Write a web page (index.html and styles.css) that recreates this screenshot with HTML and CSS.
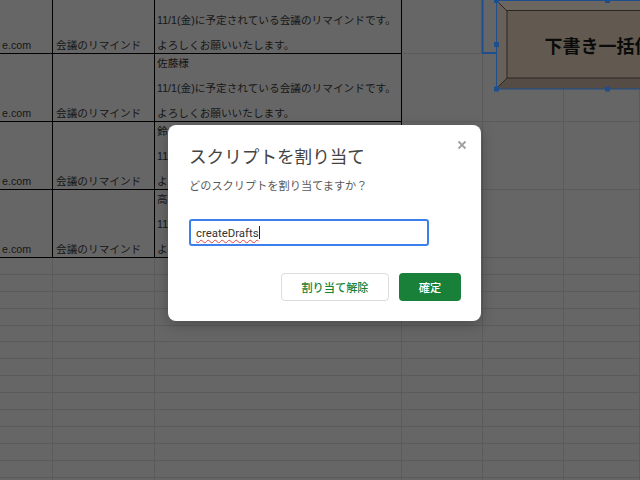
FILE: index.html
```html
<!DOCTYPE html>
<html lang="ja">
<head>
<meta charset="utf-8">
<title>スクリプトを割り当て</title>
<link rel="stylesheet" href="styles.css">
</head>
<body>
<div class="sheet">
  <div class="c b">e.com</div><div class="c b cb">会議のリマインド</div><div class="c b">田中様

11/1(金)に予定されている会議のリマインドです。

よろしくお願いいたします。</div><div class="c"></div><div class="c"></div><div class="c"></div>
  <div class="c b">e.com</div><div class="c b cb">会議のリマインド</div><div class="c b">佐藤様

11/1(金)に予定されている会議のリマインドです。

よろしくお願いいたします。</div><div class="c"></div><div class="c"></div><div class="c"></div>
  <div class="c b">e.com</div><div class="c b cb">会議のリマインド</div><div class="c b">鈴木様

11/1(金)に予定されている会議のリマインドです。

よろしくお願いいたします。</div><div class="c"></div><div class="c"></div><div class="c"></div>
  <div class="c b">e.com</div><div class="c b cb">会議のリマインド</div><div class="c b">高橋様

11/1(金)に予定されている会議のリマインドです。

よろしくお願いいたします。</div><div class="c"></div><div class="c"></div><div class="c"></div>
  <div class="c"></div><div class="c"></div><div class="c"></div><div class="c"></div><div class="c"></div><div class="c"></div>
  <div class="c"></div><div class="c"></div><div class="c"></div><div class="c"></div><div class="c"></div><div class="c"></div>
  <div class="c"></div><div class="c"></div><div class="c"></div><div class="c"></div><div class="c"></div><div class="c"></div>
  <div class="c"></div><div class="c"></div><div class="c"></div><div class="c"></div><div class="c"></div><div class="c"></div>
  <div class="c"></div><div class="c"></div><div class="c"></div><div class="c"></div><div class="c"></div><div class="c"></div>
  <div class="c"></div><div class="c"></div><div class="c"></div><div class="c"></div><div class="c"></div><div class="c"></div>
  <div class="c"></div><div class="c"></div><div class="c"></div><div class="c"></div><div class="c"></div><div class="c"></div>
  <div class="c"></div><div class="c"></div><div class="c"></div><div class="c"></div><div class="c"></div><div class="c"></div>
  <div class="c"></div><div class="c"></div><div class="c"></div><div class="c"></div><div class="c"></div><div class="c"></div>
  <div class="c"></div><div class="c"></div><div class="c"></div><div class="c"></div><div class="c"></div><div class="c"></div>
  <div class="c"></div><div class="c"></div><div class="c"></div><div class="c"></div><div class="c"></div><div class="c"></div>
  <div class="c"></div><div class="c"></div><div class="c"></div><div class="c"></div><div class="c"></div><div class="c"></div>
  <div class="c"></div><div class="c"></div><div class="c"></div><div class="c"></div><div class="c"></div><div class="c"></div>
  <div class="c"></div><div class="c"></div><div class="c"></div><div class="c"></div><div class="c"></div><div class="c"></div>
</div>

<svg class="drawing" viewBox="480 0 160 95" width="160" height="95" aria-label="下書き一括作成ボタン">
  <path d="M482.5 0 V53 H496" fill="none" stroke="#1f4e8c" stroke-width="2"/>
  <polygon points="496,0 719,0 708,11 507,11" fill="#6b665f"/>
  <polygon points="496,0 507,11 507,78 496,89" fill="#67615a"/>
  <polygon points="496,89 507,78 708,78 719,89" fill="#554d45"/>
  <rect x="507" y="10.5" width="201" height="67.5" fill="#625a50" stroke="#2a2622" stroke-width="1"/>
  <path d="M496 0 L507 11 M496 89 L507 78" stroke="#2a2622" stroke-width="1"/>
  <text class="drawing-label" x="607.5" y="45">下書き一括作成</text>
  <rect x="496.5" y="0.5" width="222" height="88.5" fill="none" stroke="#1f4e8c" stroke-width="1"/>
  <rect x="494" y="-2" width="5" height="5" fill="#1f4e8c"/>
  <rect x="494" y="42" width="5" height="5" fill="#1f4e8c"/>
  <rect x="494" y="86.5" width="5" height="5" fill="#1f4e8c"/>
  <rect x="605" y="-2" width="5" height="5" fill="#1f4e8c"/>
  <rect x="605" y="86.5" width="5" height="5" fill="#1f4e8c"/>
</svg>

<div class="dialog" role="dialog">
  <span class="close" aria-label="閉じる">
    <svg viewBox="0 0 10 10" width="10" height="10"><path d="M1.5 1.5 L8.5 8.5 M8.5 1.5 L1.5 8.5" stroke="#a0a0a0" stroke-width="1.8" fill="none"/></svg>
  </span>
  <h1 class="title">スクリプトを割り当て</h1>
  <p class="subtitle">どのスクリプトを割り当てますか？</p>
  <div class="field"><span class="value">createDrafts</span><span class="caret"></span></div>
  <div class="actions">
    <button class="btn secondary">割り当て解除</button>
    <button class="btn primary">確定</button>
  </div>
</div>
</body>
</html>
```

FILE: styles.css
```css
html, body {
  margin: 0;
  padding: 0;
  width: 640px;
  height: 480px;
  overflow: hidden;
  background: #666666;
}

.sheet {
  display: grid;
  grid-template-columns: 53px 102px 247px 81px 81px 1fr;
  grid-template-rows: 54px 68px 68px 68px repeat(14, 16.9px);
  width: 640px;
  font-family: "Liberation Sans", "Noto Sans CJK JP", sans-serif;
  font-size: 10.67px;
  line-height: 12.5px;
  color: #161616;
}

.c {
  box-sizing: border-box;
  border-right: 1px solid #5b5b5b;
  border-bottom: 1px solid #5b5b5b;
  display: flex;
  flex-direction: column;
  justify-content: flex-end;
  padding: 0 2px 2px 2px;
  overflow: hidden;
  white-space: pre-line;
  min-height: 0;
}

.b {
  border-color: #000;
}

.cb {
  padding-left: 3px;
}

.drawing {
  position: absolute;
  left: 480px;
  top: 0;
  overflow: hidden;
}

.drawing-label {
  font-family: "Noto Sans CJK JP", sans-serif;
  font-size: 18px;
  font-weight: 700;
  fill: #0b0b0b;
  text-anchor: middle;
  dominant-baseline: central;
}

.dialog {
  position: absolute;
  left: 168px;
  top: 125px;
  width: 313px;
  box-sizing: border-box;
  padding: 20px 20px 20px 21px;
  background: #ffffff;
  border-radius: 8px;
  box-shadow: 0 4px 14px rgba(0, 0, 0, 0.25);
  font-family: Roboto, "Noto Sans CJK JP", sans-serif;
}

.close {
  position: absolute;
  top: 15px;
  right: 14px;
  width: 10px;
  height: 10px;
  display: block;
}

.close svg {
  display: block;
}

.title {
  margin: 0;
  font-size: 17.6px;
  line-height: 24px;
  font-weight: 400;
  color: #444444;
}

.subtitle {
  margin: 10px 0 0;
  font-size: 11.2px;
  line-height: 16px;
  color: #5a5a5a;
}

.field {
  margin-top: 24px;
  width: 240px;
  height: 27px;
  box-sizing: border-box;
  border: 2px solid #3b80ec;
  border-radius: 3px;
  padding: 0 5px;
  display: flex;
  align-items: center;
  font-size: 11.4px;
  color: #333333;
}

.value {
  text-decoration: underline wavy #e0463e;
  text-decoration-thickness: 1px;
  text-underline-offset: 2px;
}

.caret {
  width: 1px;
  height: 13px;
  background: #222222;
}

.actions {
  margin-top: 27px;
  display: flex;
  justify-content: flex-end;
  gap: 10px;
}

.btn {
  height: 28px;
  box-sizing: border-box;
  border-radius: 4px;
  padding: 0;
  font-family: Roboto, "Noto Sans CJK JP", sans-serif;
  font-size: 11.2px;
  font-weight: 500;
}

.secondary {
  width: 108px;
  border: 1px solid #dadce0;
  background: #ffffff;
  color: #188038;
}

.primary {
  width: 62px;
  border: none;
  background: #188038;
  color: #ffffff;
}
```
